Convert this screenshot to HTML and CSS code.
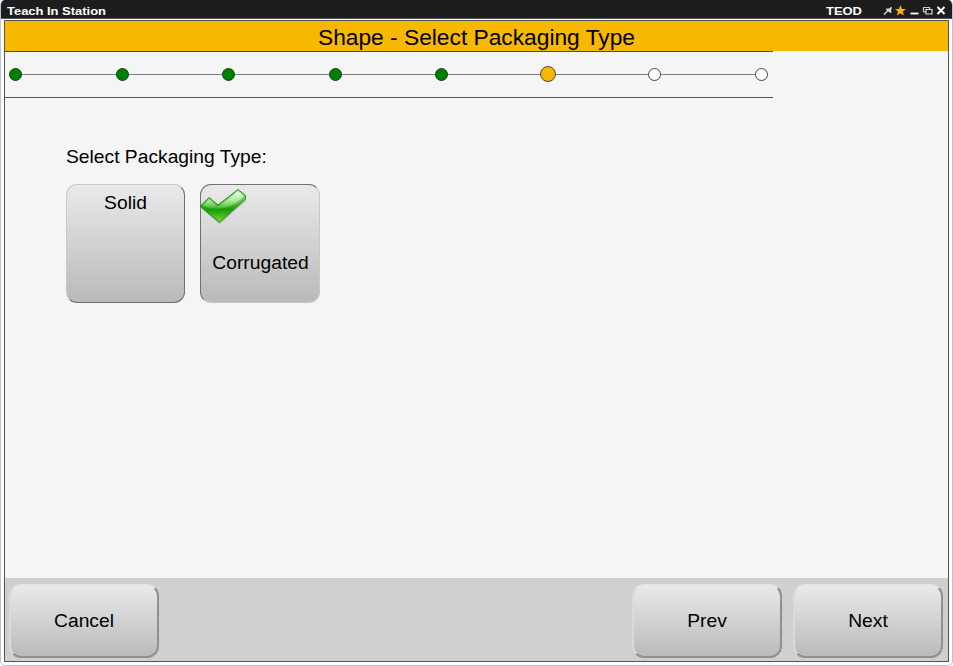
FILE: index.html
```html
<!DOCTYPE html>
<html lang="en">
<head>
<meta charset="utf-8">
<title>Teach In Station</title>
<link rel="stylesheet" href="styles.css">
</head>
<body>
<div class="window">
  <header class="titlebar">
    <span class="caption">Teach In Station</span>
    <span class="caption station">TEOD</span>
    <svg class="controls" width="66" height="18" viewBox="0 0 66 18">
      <path d="M5.500 8.500 L8.500 8.500 L10 6.500 L11 8 L10 10 L10.500 13 L8.500 12.500 L7 11 L5 10 Z" fill="#ddd"/>
      <path d="M3 14.500 L7 10.500" stroke="#ddd" stroke-width="1.300"/>
      <path d="M19.400 5 L20.900 9 L25 9 L21.800 11.500 L23 15.600 L19.400 13.200 L15.800 15.600 L17 11.500 L13.800 9 L17.900 9 Z" fill="#f7b500"/>
      <path d="M29.500 13.500 H37.500" stroke="#fff" stroke-width="1.800"/>
      <path d="M42.500 7.500 H48.500 V12 H42.500 Z" fill="none" stroke="#ccc" stroke-width="1.200"/>
      <path d="M45 9.500 H51 V14 H45 Z" fill="#1d1d1d" stroke="#ddd" stroke-width="1.200"/>
      <path d="M56.500 7 L63.500 14 M63.500 7 L56.500 14" stroke="#fff" stroke-width="2"/>
    </svg>
  </header>
  <main class="frame">
    <h1 class="heading">Shape - Select Packaging Type</h1>
    <div class="progress">
      <div class="steps">
        <i class="dot done"></i><i class="dot done"></i><i class="dot done"></i><i class="dot done"></i><i class="dot done"></i><i class="dot current"></i><i class="dot"></i><i class="dot"></i>
      </div>
    </div>
    <section class="content">
      <p class="label">Select Packaging Type:</p>
      <div class="options">
        <button class="tile">Solid</button>
        <button class="tile selected">
          <svg class="check" width="47" height="38" viewBox="0 0 47 38">
            <defs>
              <linearGradient id="leaf" x1="0" y1="0" x2="0" y2="1">
                <stop offset="0" stop-color="#9be68e"/>
                <stop offset=".4" stop-color="#55c83a"/>
                <stop offset=".6" stop-color="#169d08"/>
                <stop offset="1" stop-color="#78dc32"/>
              </linearGradient>
              <linearGradient id="shine" x1="0" y1="0" x2="0" y2="1">
                <stop offset="0" stop-color="#fff" stop-opacity=".85"/>
                <stop offset="1" stop-color="#fff" stop-opacity=".12"/>
              </linearGradient>
            </defs>
            <path d="M2 19.500 L9 12.500 L18 19.500 L38 3.500 L46 10 V13 L19.500 36 L2 21 Z" fill="#777" opacity=".35"/>
            <path d="M1.500 17 L9 9.500 L18 17 L38 1.500 L45.500 7.500 V11 L19.500 34.500 L1.500 19.500 Z" fill="url(#leaf)" stroke="#218c16" stroke-linejoin="round"/>
            <path d="M3.500 17 L9 11 L18 18.700 L38 3.300 L44 8.200 Q35 17.500 24 20 Q12 22 6 19 Z" fill="url(#shine)"/>
          </svg>
          <span>Corrugated</span>
        </button>
      </div>
    </section>
    <footer class="actions">
      <button class="action">Cancel</button>
      <button class="action prev">Prev</button>
      <button class="action">Next</button>
    </footer>
  </main>
</div>
</body>
</html>
```
FILE: styles.css
```css
* { box-sizing: border-box; }
body {
  margin: 0;
  background: #fff;
  color: #000;
  font-family: "Liberation Sans", Arial, sans-serif;
}
.window {
  display: flex;
  flex-direction: column;
  width: 953px;
  height: 666px;
  border: 1px solid #b9c8d0;
  border-top: 0;
  border-radius: 5px;
  overflow: hidden;
  background: #fcfcfc;
}
.titlebar {
  display: flex;
  flex: none;
  height: 19px;
  margin: 0 -1px;
  padding: 0 6px 0 7px;
  background: #1d1d1d;
  border-bottom: 1px solid #555;
  color: #fff;
}
.caption {
  font-size: 11.5px;
  font-weight: bold;
  line-height: 22px;
  white-space: nowrap;
  transform: scaleX(1.125);
  transform-origin: left;
}
.station { margin-left: auto; width: 55px; }
.controls { flex: none; }
.frame {
  display: flex;
  flex-direction: column;
  flex: 1;
  margin: 1px 3px 3px 3px;
  border: 1px solid #555;
  background: #f5f5f5;
}
.heading {
  flex: none;
  height: 30px;
  margin: 0;
  background: #f7b800;
  font-size: 22.75px;
  font-weight: normal;
  line-height: 33px;
  text-align: center;
}
.progress {
  flex: none;
  width: 768px;
  height: 47px;
  border-top: 1px solid #4a4a4a;
  border-bottom: 1px solid #555;
}
.steps {
  display: flex;
  justify-content: space-between;
  align-items: center;
  height: 45px;
  margin: 0 5px 0 4px;
  background: linear-gradient(#808080, #808080) 6px 22px / 747px 1px no-repeat;
}
.dot {
  width: 13px;
  height: 13px;
  border: 1px solid #444;
  border-radius: 50%;
  background: #fff;
}
.done { background: #008000; border-color: #154015; }
.current {
  width: 16px;
  height: 16px;
  margin: -1px -1.5px 0;
  background: #f7b800;
}
.content {
  flex: 1;
  padding: 48px 61px;
}
.label {
  margin: 0;
  font-size: 19.25px;
  line-height: 22px;
}
.options {
  display: flex;
  gap: 15px;
  margin-top: 16px;
}
button {
  display: flex;
  justify-content: center;
  padding: 0;
  color: #000;
  font: 19.25px "Liberation Sans", Arial, sans-serif;
  background: linear-gradient(#eaeaea, #b9b9b9);
}
.tile {
  position: relative;
  width: 119px;
  height: 119px;
  padding-top: 7px;
  line-height: 22px;
  border: 1.5px solid;
  border-color: #c8c8c8 #707070 #707070 #c8c8c8;
  border-radius: 11px;
  background-origin: border-box;
}
.selected {
  width: 120px;
  padding: 67px 0 0 1px;
  border-color: #707070 #c8c8c8 #c8c8c8 #707070;
}
.check {
  position: absolute;
  top: 3px;
  left: -1px;
}
.actions {
  display: flex;
  flex: none;
  gap: 11px;
  height: 83px;
  padding: 6px 5px 3px 4px;
  background: #cfcfcf;
}
.action {
  width: 150px;
  height: 74px;
  padding-bottom: 1px;
  align-items: center;
  border: 2px solid;
  border-color: #e4e4e4 #909090 #909090 #dadada;
  border-radius: 12px;
  background-origin: border-box;
}
.prev { margin-left: auto; }
```
